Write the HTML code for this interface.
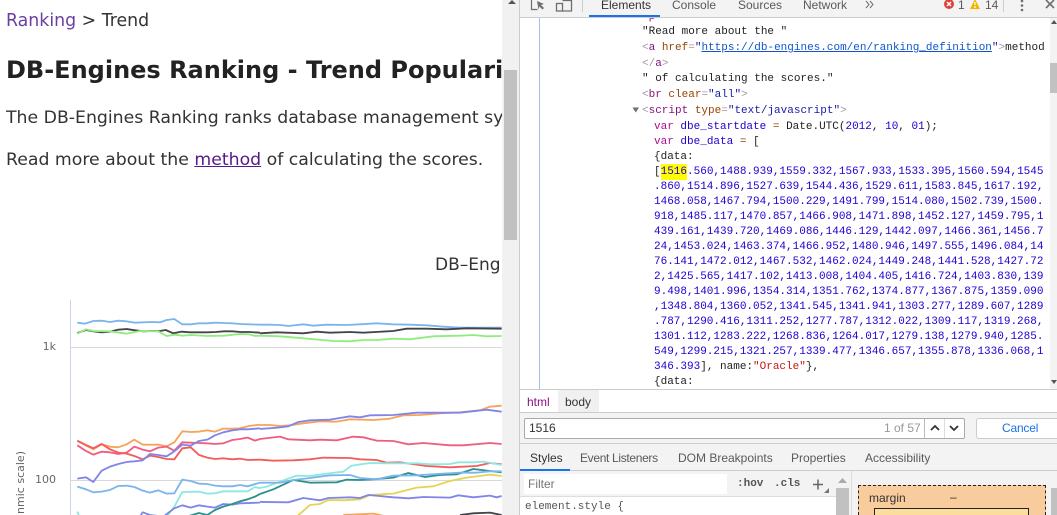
<!DOCTYPE html>
<html><head><meta charset="utf-8"><style>
html,body{margin:0;padding:0;width:1057px;height:515px;overflow:hidden;background:#fff}
.a{position:absolute;white-space:pre}
#page{position:absolute;left:0;top:0;width:502px;height:515px;overflow:hidden;font-family:"DejaVu Sans",sans-serif;color:#333}
#dt{position:absolute;left:519px;top:0;width:538px;height:515px;overflow:hidden;background:#fff;font-family:"Liberation Sans",sans-serif;border-left:1px solid #ccc;box-sizing:border-box}
#code{position:absolute;left:0;top:0;width:530px;height:389px;overflow:hidden;font:11px "Liberation Mono",monospace;color:#222;white-space:pre}
.t{color:#881280}.b{color:#a894a6}.n{color:#994500}.v{color:#1a1aa6}.k{color:#aa0d91}.i{color:#1c00cf}.s{color:#c41a16}
</style></head><body>
<div id="page">
<div class="a" style="left:6px;top:11px;font-size:17.35px;line-height:20px"><span style="color:#6b3fa0">Ranking</span> &gt; Trend</div>
<div class="a" style="left:6px;top:55px;font-size:24px;line-height:30px;font-weight:bold;color:#222;width:496px;overflow:hidden">DB-Engines Ranking - Trend Popularity</div>
<div class="a" style="left:6px;top:108px;font-size:17.3px;line-height:20px;width:496px;overflow:hidden">The DB-Engines Ranking ranks database management systems</div>
<div class="a" style="left:6px;top:150px;font-size:17.3px;line-height:20px">Read more about the <span style="color:#551a8b;text-decoration:underline">method</span> of calculating the scores.</div>
<div class="a" style="left:435px;top:255px;font-size:17px;line-height:20px;width:66px;overflow:hidden">DB–Engines</div>
<svg class="a" style="left:0;top:0" width="502" height="515" fill="none">
<path d="M70.5 300V515" stroke="#ccd6eb"/><path d="M70 347.5H502M70 480.5H502" stroke="#d8d8d8"/>
<text x="56" y="350" text-anchor="end" font-size="11" fill="#666" font-family="DejaVu Sans">1k</text>
<text x="56" y="483" text-anchor="end" font-size="11" fill="#666" font-family="DejaVu Sans">100</text>
<text transform="translate(24,451) rotate(-90)" text-anchor="end" font-size="11" fill="#666" font-family="DejaVu Sans">nmic scale)</text>
<g transform="translate(0,290) scale(.3333)" stroke-width="5.5" stroke-linejoin="round">
<polyline stroke="#7cb5ec" points="232,98 255,101 280,93 305,92 330,96 355,92 380,94 405,98 430,97 455,96 480,97 500,90 523,87 547,103 572,103 597,100 622,100 647,98 672,99 697,100 722,102 747,103 780,104"/>
<polyline stroke="#434348" points="232,129 258,120 280,124 305,127 330,125 355,119 380,117 405,121 430,124 455,123 480,123 497,120 520,130 545,125 570,127 597,127 622,127 647,126 672,124 697,124 722,126 747,126 780,128"/>
<polyline stroke="#90ed7d" points="232,131 258,118 280,123 330,124 380,131 420,123 475,124 500,138 525,134 547,137 572,135 622,138 672,137 720,132 747,133 765,138 780,137"/>
<polyline stroke="#f7a35c" points="232,453 280,478 305,463 330,470 355,472 380,463 403,449 428,464 475,464 500,469 523,457 547,424 572,426 597,425 622,421 645,425 670,416 697,416 720,415 747,408 780,404"/>
<polyline stroke="#f15c80" points="232,466 258,483 280,494 305,485 330,487 355,492 380,488 403,470 428,479 450,484 475,473 500,470 523,482 547,457 572,458 597,459 622,460 645,462 670,460 697,450 720,447 743,443 765,452 780,447"/>
<polyline stroke="#f45b5b" points="232,452 258,465 280,475 305,462 330,478 355,488 380,491 403,498 428,508 450,497 475,501 500,507 523,508 547,475 572,472 597,495 622,503 645,507 670,505 697,508 720,506 743,510 780,509"/>
<polyline stroke="#8085e9" points="232,566 258,562 280,576 305,542 330,530 355,522 380,516 403,514 428,511 450,492 475,495 500,499 523,484 547,464 572,467 597,453 622,449 645,436 670,427 697,421 720,418 743,418 780,415"/>
<polyline stroke="#7cb5ec" points="232,590 258,598 280,607 305,605 330,600 355,588 380,587 403,591 428,602 450,608 475,601 500,611 523,610 547,569 572,573 597,581 622,582 645,587 670,589 697,589 720,585 743,589 780,578"/>
<polyline stroke="#8ee8e0" points="232,665 238,680"/>
<polyline stroke="#8ee8e0" points="500,680 523,650 547,606 597,605 622,611 645,610 670,604 743,604 765,591 780,595"/>
<polyline stroke="#8085e9" points="420,680 428,667 450,675 490,680 523,655 547,646 572,653 597,646 622,650 645,653 670,642 697,644 720,640 780,638"/>
<polyline stroke="#2b908f" points="560,680 597,669 622,675 645,660 670,650 697,642 720,634 743,628 765,620 780,612"/>
</g>
<g transform="translate(260,290) scale(.3333)" stroke-width="5.5" stroke-linejoin="round">
<polyline stroke="#7cb5ec" points="0,104 30,104 60,105 85,108 130,103 160,107 200,104 260,105 300,103 350,100 400,103 450,104 500,106 550,110 600,113 725,113"/>
<polyline stroke="#434348" points="0,130 50,127 130,130 170,125 210,128 270,126 310,128 400,123 440,116 500,116 560,118 620,115 725,116"/>
<polyline stroke="#90ed7d" points="0,137 60,139 130,145 220,153 270,154 310,150 350,150 400,146 450,148 520,139 600,137 640,135 680,139 725,138"/>
<polyline stroke="#f7a35c" points="0,405 30,405 60,408 90,406 130,400 180,394 230,395 270,388 340,390 390,386 430,376 480,375 540,370 600,367 660,361 690,350 725,347"/>
<polyline stroke="#8085e9" points="0,417 50,413 85,409 115,396 150,391 210,389 270,379 300,382 330,376 400,375 470,368 600,368 680,359 725,365"/>
<polyline stroke="#f15c80" points="0,447 60,440 85,448 150,451 180,449 230,451 280,440 310,442 350,452 400,453 445,463 490,459 570,466 610,466 690,459 725,462"/>
<polyline stroke="#f45b5b" points="0,509 40,512 100,511 150,508 190,503 270,504 300,508 350,510 380,518 420,517 500,528 570,532 650,528 690,519 725,523"/>
<polyline stroke="#8ee8e0" points="0,594 20,590 60,575 110,557 150,558 200,551 250,545 275,527 330,519 380,520 470,520 510,523 570,522 595,517 640,517 670,515 725,525"/>
<polyline stroke="#2b908f" points="0,612 40,598 100,570 150,578 230,577 260,569 300,570 340,568 400,563 445,549 495,561 540,555 590,553 640,537 680,542 725,547"/>
<polyline stroke="#7cb5ec" points="0,578 60,578 100,570 150,564 210,556 270,555 300,564 350,568 400,557 470,556 530,552 600,548 650,548 690,544 725,544"/>
<polyline stroke="#e4d354" points="110,680 150,645 180,642 205,630 250,631 300,628 330,615 400,611 470,593 520,589 570,573 620,563 690,554 725,558"/>
<polyline stroke="#8085e9" points="0,636 85,637 130,624 180,631 205,624 270,622 300,624 325,615 400,622 445,625 490,621 570,623 595,616 640,622 690,617 710,622 725,618"/>
<polyline stroke="#f7a35c" points="250,675 340,671 380,680"/>
<polyline stroke="#434348" points="600,675 640,670 690,668 725,675"/>
</g>
</svg>
</div>
<div class="a" style="left:502px;top:0;width:17px;height:515px;background:#f1f1f1"></div>
<div class="a" style="left:504px;top:70px;width:13px;height:170px;background:#c1c1c1"></div>
<div class="a" style="left:508px;top:0;width:0;height:0;border:4px solid transparent;border-top:0;border-bottom:4px solid #555"></div>

<div id="dt">
<div class="a" style="left:18.5px;top:18px;width:1px;height:371px;background:#a6bdf2"></div>
<div id="code"><div class="a" style="left:122px;top:10px;line-height:14px"><span class="t">&lt;p&gt;</span></div><div class="a" style="left:122px;top:25px;line-height:15.83px">"Read more about the "
<span class="b">&lt;</span><span class="t">a</span> <span class="n">href</span><span class="b">=</span><span class="v">"<u style="color:#1155cc">https://db-engines.com/en/ranking_definition</u>"</span><span class="b">&gt;</span>method
<span class="b">&lt;/</span><span class="t">a</span><span class="b">&gt;</span>
" of calculating the scores."
<span class="b">&lt;</span><span class="t">br</span> <span class="n">clear</span><span class="b">=</span><span class="v">"all"</span><span class="b">&gt;</span>
<span class="b">&lt;</span><span class="t">script</span> <span class="n">type</span><span class="b">=</span><span class="v">"text/javascript"</span><span class="b">&gt;</span></div><div class="a" style="left:134px;top:120px;line-height:15px"><span class="k">var</span> <span class="i">dbe_startdate</span> <span class="n">=</span> Date.UTC(<span class="i">2012</span>, <span class="i">10</span>, <span class="i">01</span>);
<span class="k">var</span> <span class="i">dbe_data</span> <span class="n">=</span> [
{data:
[<span style="background:#ffff00;color:#1c00cf;padding:2px 0">1516</span><span class="i">.560,1488.939,1559.332,1567.933,1533.395,1560.594,1545</span>
<span class="i">.860,1514.896,1527.639,1544.436,1529.611,1583.845,1617.192,</span>
<span class="i">1468.058,1467.794,1500.229,1491.799,1514.080,1502.739,1500.</span>
<span class="i">918,1485.117,1470.857,1466.908,1471.898,1452.127,1459.795,1</span>
<span class="i">439.161,1439.720,1469.086,1446.129,1442.097,1466.361,1456.7</span>
<span class="i">24,1453.024,1463.374,1466.952,1480.946,1497.555,1496.084,14</span>
<span class="i">76.141,1472.012,1467.532,1462.024,1449.248,1441.528,1427.72</span>
<span class="i">2,1425.565,1417.102,1413.008,1404.405,1416.724,1403.830,139</span>
<span class="i">9.498,1401.996,1354.314,1351.762,1374.877,1367.875,1359.090</span>
<span class="i">,1348.804,1360.052,1341.545,1341.941,1303.277,1289.607,1289</span>
<span class="i">.787,1290.416,1311.252,1277.787,1312.022,1309.117,1319.268,</span>
<span class="i">1301.112,1283.222,1268.836,1264.017,1279.138,1279.940,1285.</span>
<span class="i">549,1299.215,1321.257,1339.477,1346.657,1355.878,1336.068,1</span>
<span class="i">346.393</span>], name:<span class="s">"Oracle"</span>},
{data:</div></div>
<svg class="a" style="left:0;top:0" width="538" height="389"><path d="M112.500 107.500h6.500l-3.250 5z" fill="#6e6e6e"/></svg>

<div class="a" style="left:0;top:0;width:538px;height:18px;background:#f3f3f3;border-bottom:1px solid #ccc;box-sizing:border-box;font-size:12px;color:#5a5a5a">
<svg class="a" style="left:0;top:0" width="538" height="17" fill="none" stroke="#6e6e6e">
<path d="M11.500 0v9.500h6" stroke-width="1.200"/><path d="M17 1l7 3-3 1 3 3-1.500 1.500-3-3-1 3z" fill="#6e6e6e" stroke="none"/>
<rect x="36.500" y="3.500" width="6" height="7.500" stroke-width="1.300"/><path d="M42.500 0.500h9V11h-9" stroke-width="1.300"/>
<path d="M62.500 0V12" stroke="#ccc"/>
<circle cx="429" cy="4" r="5" fill="#e0403a" stroke="none"/><path d="M427 2l4 4M431 2l-4 4" stroke="#fff" stroke-width="1.500"/>
<path d="M450 9h10l-5-10z" fill="#f4b400" stroke="none"/><path d="M455 2v3M455 6v2" stroke="#fff" stroke-width="1.200"/>
<path d="M483.500 0V12" stroke="#ccc"/>
<circle cx="502" cy="1" r="1.300" fill="#6e6e6e" stroke="none"/><circle cx="502" cy="5.500" r="1.300" fill="#6e6e6e" stroke="none"/><circle cx="502" cy="10" r="1.300" fill="#6e6e6e" stroke="none"/>
<path d="M526 0l8 8M534 0l-8 8" stroke-width="1.600"/>
<path d="M346 1l3 3.500-3 3.500M350 1l3 3.500-3 3.500"/>
</svg>
<span class="a" style="left:81px;top:-2px;color:#333">Elements</span>
<span class="a" style="left:152px;top:-2px">Console</span>
<span class="a" style="left:218px;top:-2px">Sources</span>
<span class="a" style="left:283px;top:-2px">Network</span>
<span class="a" style="left:438px;top:-2px">1</span>
<span class="a" style="left:465px;top:-2px">14</span>
<div class="a" style="left:69px;top:15px;width:71px;height:2px;background:#1a73e8"></div>
</div>

<div class="a" style="left:530px;top:18px;width:8px;height:371px;background:#f3f3f3"></div>
<div class="a" style="left:530px;top:63px;width:8px;height:30px;background:#c1c1c1"></div>
<svg class="a" style="left:530px;top:18px" width="8" height="371"><path d="M1 6l3-4 3 4zM1 362l3 4 3-4z" fill="#555"/></svg>

<div class="a" style="left:0;top:389px;width:538px;height:126px;background:#f3f3f3"></div>
<div class="a" style="left:0;top:389px;width:538px;height:1px;background:#ccc"></div>
<div class="a" style="left:0;top:390px;width:538px;height:22px;background:#fff;font-size:12px;line-height:24px;color:#333">
<span class="a" style="left:38px;top:0;width:41px;height:22px;background:#f0f0f0"></span>
<span class="a" style="left:7px;top:0;color:#881280">html</span><span class="a" style="left:45px;top:0">body</span></div>
<div class="a" style="left:0;top:412px;width:538px;height:1px;background:#ccc"></div>
<div class="a" style="left:4px;top:418px;width:441px;height:21px;background:#fff;border:1px solid #aaa;border-radius:2px;box-sizing:border-box;font-size:12px;line-height:19px;color:#333"><span class="a" style="left:4px;top:0">1516</span><span class="a" style="left:359px;top:0;color:#999">1 of 57</span>
<span class="a" style="left:399px;top:0;width:1px;height:19px;background:#bbb"></span><span class="a" style="left:419px;top:0;width:1px;height:19px;background:#ddd"></span>
<svg class="a" style="left:400px;top:0" width="40" height="19" fill="none" stroke="#333" stroke-width="1.800"><path d="M6 11l4-4 4 4M25 7l4 4 4-4"/></svg></div>
<div class="a" style="left:456px;top:418px;width:81px;height:21px;background:#fff;border:1px solid #ccc;border-right:0;border-radius:3px 0 0 3px;box-sizing:border-box;font-size:12px;line-height:19px;color:#1a73e8"><span class="a" style="left:25px;top:0;letter-spacing:-.2px">Cancel</span></div>
<div class="a" style="left:0;top:443px;width:538px;height:1px;background:#ccc"></div>
<div class="a" style="left:0;top:451px;width:538px;height:16px;font-size:12px;line-height:14px;color:#5a5a5a">
<span class="a" style="left:10px;top:0;color:#333">Styles</span><span class="a" style="left:60px;top:0;letter-spacing:-.33px">Event Listeners</span><span class="a" style="left:158px;top:0">DOM Breakpoints</span><span class="a" style="left:271px;top:0">Properties</span><span class="a" style="left:345px;top:0">Accessibility</span></div>
<div class="a" style="left:0;top:470px;width:538px;height:1px;background:#ccc"></div>
<div class="a" style="left:0;top:469px;width:50px;height:2px;background:#1a73e8"></div>
<div class="a" style="left:0;top:471px;width:317px;height:44px;background:#fff"></div>
<div class="a" style="left:0;top:471px;width:317px;height:26px;background:#f3f3f3;border-bottom:1px solid #ddd;box-sizing:border-box"></div>
<div class="a" style="left:4px;top:474px;width:203px;height:20px;background:#fff;font-size:12px;line-height:20px;color:#757575;padding-left:4px;box-sizing:border-box">Filter</div>
<div class="a" style="left:217px;top:477px;font:bold 11px/14px 'Liberation Mono',monospace;color:#555">:hov</div>
<div class="a" style="left:254px;top:477px;font:bold 11px/14px 'Liberation Mono',monospace;color:#555">.cls</div>
<svg class="a" style="left:293px;top:478px" width="24" height="16" fill="none"><path d="M0 6.500h10M5 1.500v10" stroke="#666" stroke-width="1.500"/><path d="M16 10v5h-5z" fill="#777"/></svg>
<div class="a" style="left:5px;top:500px;font:11px/15px 'Liberation Mono',monospace;color:#555">element.style {</div>
<div class="a" style="left:316px;top:471px;width:16px;height:44px;background:#f3f3f3"></div>
<div class="a" style="left:316px;top:488px;width:13px;height:27px;background:#c1c1c1"></div>
<svg class="a" style="left:316px;top:477px" width="13" height="7"><path d="M2 6l4.500-5 4.500 5z" fill="#aaa"/></svg>
<div class="a" style="left:331px;top:471px;width:1px;height:44px;background:#ddd"></div>
<div class="a" style="left:338px;top:485px;width:188px;height:30px;background:#f9cc9d;border:1px dashed #222;border-bottom:0;box-sizing:border-box"></div>
<div class="a" style="left:354px;top:508px;width:155px;height:7px;background:#fddd9b;border:1px solid #222;border-bottom:0;box-sizing:border-box"></div>
<div class="a" style="left:349px;top:491px;font-size:12px;line-height:14px;color:#333">margin</div>
<div class="a" style="left:430px;top:490px;font-size:12px;line-height:14px;color:#333">–</div>
<div class="a" style="left:531px;top:471px;width:7px;height:44px;background:#f3f3f3"></div>
<div class="a" style="left:531px;top:488px;width:7px;height:27px;background:#c1c1c1"></div>
</div>
</body></html>
